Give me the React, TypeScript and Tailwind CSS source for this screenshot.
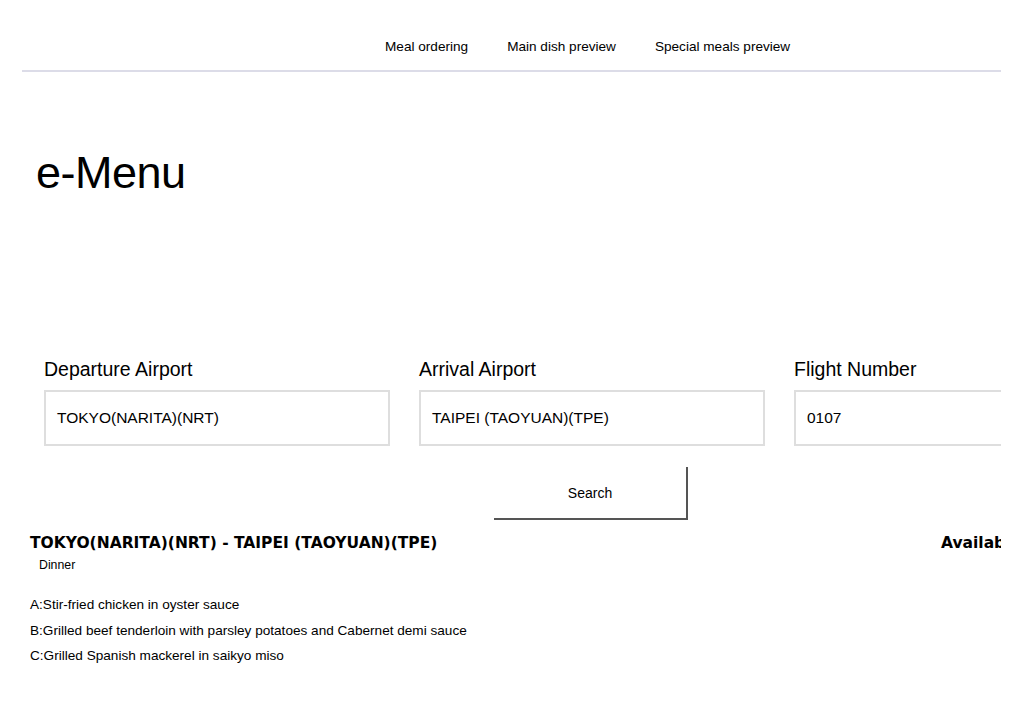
const navItems = ["Meal ordering", "Main dish preview", "Special meals preview"];

const fields = [
  { label: "Departure Airport", value: "TOKYO(NARITA)(NRT)" },
  { label: "Arrival Airport", value: "TAIPEI (TAOYUAN)(TPE)" },
  { label: "Flight Number", value: "0107" },
];

const meals = [
  "A:Stir-fried chicken in oyster sauce",
  "B:Grilled beef tenderloin with parsley potatoes and Cabernet demi sauce",
  "C:Grilled Spanish mackerel in saikyo miso",
];

const App = () => {
  return (
    <div className="w-[1024px] h-[724px] bg-white text-black font-['Liberation_Sans',Arial,sans-serif] overflow-hidden">
      <div className="mx-[22px] w-[979px] overflow-hidden">
        <nav className="h-[72px] border-b-2 border-[#dcdce8] flex items-end pl-[363px] pb-[15px]">
          <ul className="flex items-center gap-[39px] text-[13.6px] leading-[16px]">
            {navItems.map((item) => (
              <li key={item} className="cursor-pointer">
                {item}
              </li>
            ))}
          </ul>
        </nav>

        <h1 className="mt-[78px] ml-[14px] text-[45px] font-light leading-none tracking-[-0.5px]">e-Menu</h1>

        <div className="mt-[163px] ml-[22px] flex gap-[29px] w-[1100px]">
          {fields.map((f) => (
            <div key={f.label} className="w-[346px] shrink-0">
              <label className="block text-[19.5px] leading-[22px]">{f.label}</label>
              <div className="mt-[10px] h-[56px] border-2 border-[#dedede] flex items-center px-[11px] text-[15.5px]">
                {f.value}
              </div>
            </div>
          ))}
        </div>

        <div className="mt-[21px] flex justify-center">
          <button className="ml-[159px] w-[194px] h-[53px] border-r-2 border-b-2 border-[#555] text-[14px] pt-[1px]">
            Search
          </button>
        </div>

        <div className="mt-[14px] ml-[8px] flex w-[1100px] font-['DejaVu_Sans',Verdana,sans-serif] font-bold text-[15.5px] leading-[18px]">
          <span className="w-[911px] shrink-0">TOKYO(NARITA)(NRT) - TAIPEI (TAOYUAN)(TPE)</span>
          <span>Available</span>
        </div>
        <div className="ml-[17px] mt-[6px] text-[12.3px] leading-[14px]">Dinner</div>

        <ul className="mt-[20px] ml-[8px] text-[13.6px]">
          {meals.map((m) => (
            <li key={m} className="leading-[25.5px]">
              {m}
            </li>
          ))}
        </ul>
      </div>
    </div>
  );
};

export default App;
